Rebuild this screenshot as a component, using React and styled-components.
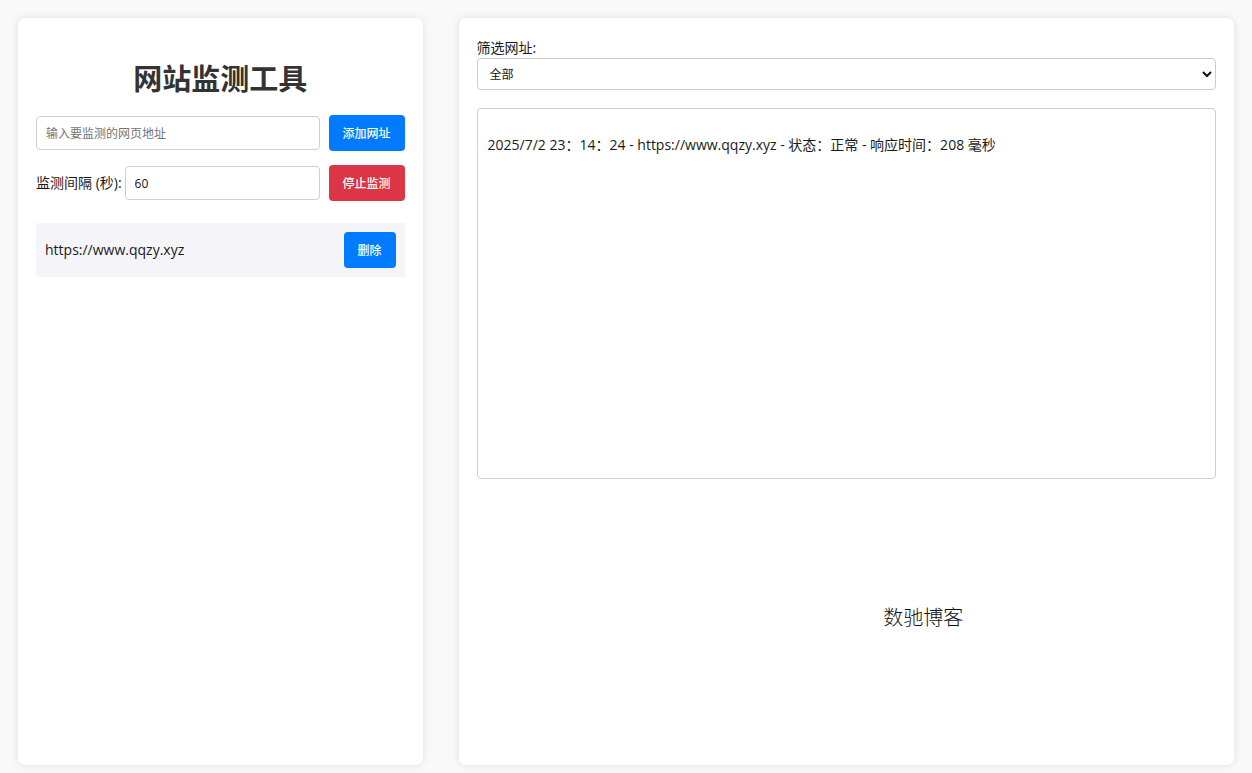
import React, { useState } from 'react';
import styled, { createGlobalStyle } from 'styled-components';

const GlobalStyle = createGlobalStyle`
  *, *::before, *::after { box-sizing: border-box; }
  body {
    margin: 0;
    background: #f9f9f9;
    color: #1a1a1a;
    font-family: 'Open Sans', 'Noto Sans CJK SC', sans-serif;
    font-size: 14px;
    line-height: 20px;
  }
  input, select, button { font-family: inherit; font-size: 12px; }
`;

const Page = styled.div`
  display: grid;
  grid-template-columns: minmax(0, 12fr) minmax(0, 23fr);
  gap: 36px;
  min-height: 100vh;
  padding: 18px 18px 8px;
`;

const Panel = styled.section`
  padding: 20px 18px;
  background: #fff;
  border-radius: 7px;
  box-shadow: 0 0 9px rgba(0, 0, 0, 0.1);
`;

const Title = styled.h1`
  margin: 21px 0 16px;
  color: #333;
  font-size: 29px;
  font-weight: 700;
  line-height: 40px;
  text-align: center;
`;

const Row = styled.form`
  display: flex;
  align-items: center;
  gap: 9px;
  margin-bottom: 14px;
`;

const Field = styled.div`
  display: flex;
  flex: 1;
  align-items: center;
  gap: 3px;
  min-width: 0;
`;

const TextInput = styled.input`
  flex: 1;
  min-width: 0;
  height: 34px;
  padding: 0 9px;
  border: 1px solid #d0d0d0;
  border-radius: 4px;
  background: #fff;
  color: #111;

  &::placeholder { color: #757575; }
`;

const Button = styled.button`
  height: 36px;
  padding: 0 14px;
  border: 0;
  border-radius: 4px;
  background: ${({ $danger }) => ($danger ? '#dc3545' : '#007bff')};
  color: #fff;
  font-weight: 500;
  cursor: pointer;
`;

const SiteList = styled.ul`
  margin: 22px 0 0;
  padding: 0;
  list-style: none;
`;

const SiteItem = styled.li`
  display: flex;
  align-items: center;
  justify-content: space-between;
  padding: 9px;
  border-radius: 2px;
  background: #f4f4f9;
`;

const FilterLabel = styled.label`
  display: block;
`;

const Select = styled.select`
  display: block;
  width: 100%;
  height: 32px;
  padding: 0 8px;
  border: 1px solid #ccc;
  border-radius: 4px;
  background: #fff;
  color: #111;
`;

const Log = styled.div`
  height: 371px;
  margin-top: 18px;
  padding: 26px 10px;
  overflow-y: auto;
  border: 1px solid #d0d0d0;
  border-radius: 4px;
`;

const LogEntry = styled.p`
  margin: 0;
`;

const Signature = styled.p`
  margin: 125px 0 0 55%;
  color: #111;
  font-size: 20px;
  font-weight: 300;
  line-height: 28px;
`;

export default function App() {
  const [url, setUrl] = useState('');
  const [seconds, setSeconds] = useState('60');
  const stop = (event) => event.preventDefault();

  return (
    <>
      <GlobalStyle />
      <Page lang="zh-CN">
        <Panel>
          <Title>网站监测工具</Title>
          <Row onSubmit={stop}>
            <TextInput
              aria-label="网页地址"
              placeholder="输入要监测的网页地址"
              value={url}
              onChange={(event) => setUrl(event.target.value)}
            />
            <Button type="submit">添加网址</Button>
          </Row>
          <Row onSubmit={stop}>
            <Field>
              <label htmlFor="interval">监测间隔 (秒):</label>
              <TextInput
                id="interval"
                type="number"
                value={seconds}
                onChange={(event) => setSeconds(event.target.value)}
              />
            </Field>
            <Button type="submit" $danger>停止监测</Button>
          </Row>
          <SiteList>
            <SiteItem>
              <span>https://www.qqzy.xyz</span>
              <Button type="button">删除</Button>
            </SiteItem>
          </SiteList>
        </Panel>
        <Panel>
          <FilterLabel htmlFor="filter">筛选网址:</FilterLabel>
          <Select id="filter" defaultValue="all">
            <option value="all">全部</option>
            <option value="site">https://www.qqzy.xyz</option>
          </Select>
          <Log>
            <LogEntry>
              2025/7/2 23：14：24 - https://www.qqzy.xyz - 状态：正常 - 响应时间：208 毫秒
            </LogEntry>
          </Log>
          <Signature>数驰博客</Signature>
        </Panel>
      </Page>
    </>
  );
}
